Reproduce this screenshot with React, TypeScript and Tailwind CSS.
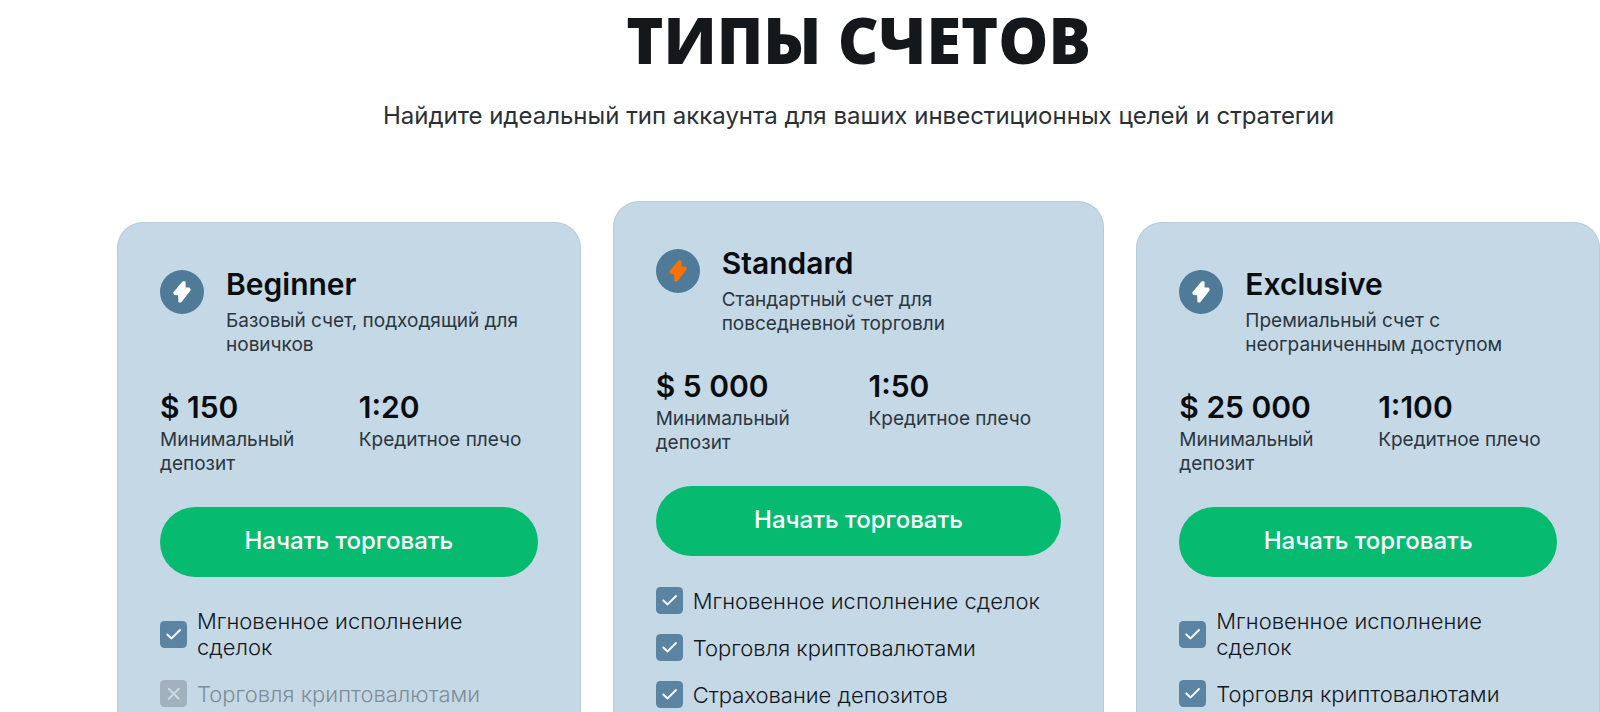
type Feature = { label: string; included: boolean };

type Plan = {
  name: string;
  description: string;
  deposit: string;
  leverage: string;
  featured?: boolean;
  features: Feature[];
};

const plans: Plan[] = [
  {
    name: "Beginner",
    description: "Базовый счет, подходящий для новичков",
    deposit: "$ 150",
    leverage: "1:20",
    features: [
      { label: "Мгновенное исполнение сделок", included: true },
      { label: "Торговля криптовалютами", included: false },
    ],
  },
  {
    name: "Standard",
    description: "Стандартный счет для повседневной торговли",
    deposit: "$ 5 000",
    leverage: "1:50",
    featured: true,
    features: [
      { label: "Мгновенное исполнение сделок", included: true },
      { label: "Торговля криптовалютами", included: true },
      { label: "Страхование депозитов", included: true },
    ],
  },
  {
    name: "Exclusive",
    description: "Премиальный счет с неограниченным доступом",
    deposit: "$ 25 000",
    leverage: "1:100",
    features: [
      { label: "Мгновенное исполнение сделок", included: true },
      { label: "Торговля криптовалютами", included: true },
    ],
  },
];

function BoltBadge({ accent }: { accent?: boolean }) {
  return (
    <svg viewBox="0 0 44 44" className="size-11 shrink-0" aria-hidden="true">
      <circle cx="22" cy="22" r="22" fill="#4f7b99" />
      <path
        d="M23.2 12.2 L14.2 22.8 L14.8 24 L19.1 24.2 L19.4 31.4 L20.8 31.4 L29.7 19.8 L29.2 18.5 L24.6 18.3 L24.6 12.2 Z"
        fill={accent ? "#ff7200" : "#ffffff"}
        stroke={accent ? "#ff7200" : "#ffffff"}
        strokeWidth="2"
        strokeLinejoin="round"
      />
    </svg>
  );
}

function FeatureMark({ included }: { included: boolean }) {
  return (
    <svg viewBox="0 0 27 27" className="size-[27px] shrink-0" fill="none" aria-hidden="true">
      <rect width="27" height="27" rx="4.5" fill={included ? "#5b84a3" : "#a1b2be"} />
      {included ? (
        <path d="M7.3 13.4 L11.6 17.4 L20 9" stroke="#f4fafd" strokeWidth="2" strokeLinecap="round" strokeLinejoin="round" />
      ) : (
        <path d="M8.8 8.8 L18.8 18.8 M18.8 8.8 L8.8 18.8" stroke="#cddae4" strokeWidth="2" strokeLinecap="round" />
      )}
    </svg>
  );
}

function Stat({ value, label }: { value: string; label: string }) {
  return (
    <div className="flex flex-col-reverse justify-end">
      <dt className="pt-0.5 text-[19px] leading-6 text-[#2a3640]">{label}</dt>
      <dd className="text-[30px] leading-[38px] font-semibold text-[#0a0d10]">{value}</dd>
    </div>
  );
}

function PlanCard({ plan }: { plan: Plan }) {
  return (
    <article
      className={`rounded-t-[26px] border border-b-0 border-[#b3cddd] bg-[#c5d8e5] px-[42px] pt-[42px] ${plan.featured ? "" : "mt-[21px]"}`}
    >
      <header className="flex gap-[22px]">
        <div className="pt-[5px]">
          <BoltBadge accent={plan.featured} />
        </div>
        <div>
          <h2 className="text-[30px] leading-[38px] font-semibold text-[#0a0d10]">{plan.name}</h2>
          <p className="mt-1.5 text-[19px] leading-6 text-[#2a3640]">{plan.description}</p>
        </div>
      </header>

      <dl className="mt-[31px] grid grid-cols-2 gap-5">
        <Stat value={plan.deposit} label="Минимальный депозит" />
        <Stat value={plan.leverage} label="Кредитное плечо" />
      </dl>

      <button type="button" className="mt-[31px] h-[70px] w-full rounded-full bg-[#06ba70] pb-0.5 text-2xl font-medium text-white">
        Начать торговать
      </button>

      <ul className="mt-[31px] flex flex-col gap-5">
        {plan.features.map((feature) => (
          <li
            key={feature.label}
            className={`flex items-center gap-2.5 text-[22px] leading-[26px] font-light ${feature.included ? "text-[#12171c]" : "text-[#7f8d98]"}`}
          >
            <FeatureMark included={feature.included} />
            <span>{feature.label}</span>
          </li>
        ))}
      </ul>
    </article>
  );
}

export default function App() {
  return (
    <main className="flex min-h-screen flex-col bg-white pl-[117px] font-['Inter',sans-serif]">
      <div className="text-center">
        <h1 className="font-['Open_Sans',sans-serif] text-[63px] leading-[80px] font-extrabold text-[#14181b]">ТИПЫ СЧЕТОВ</h1>
        <p className="mt-4 text-2xl leading-10 text-[#2a3036]">
          Найдите идеальный тип аккаунта для ваших инвестиционных целей и стратегии
        </p>
      </div>
      <section className="mt-[65px] grid grow grid-cols-[464fr_492fr_464fr] gap-8">
        {plans.map((plan) => (
          <PlanCard key={plan.name} plan={plan} />
        ))}
      </section>
    </main>
  );
}
